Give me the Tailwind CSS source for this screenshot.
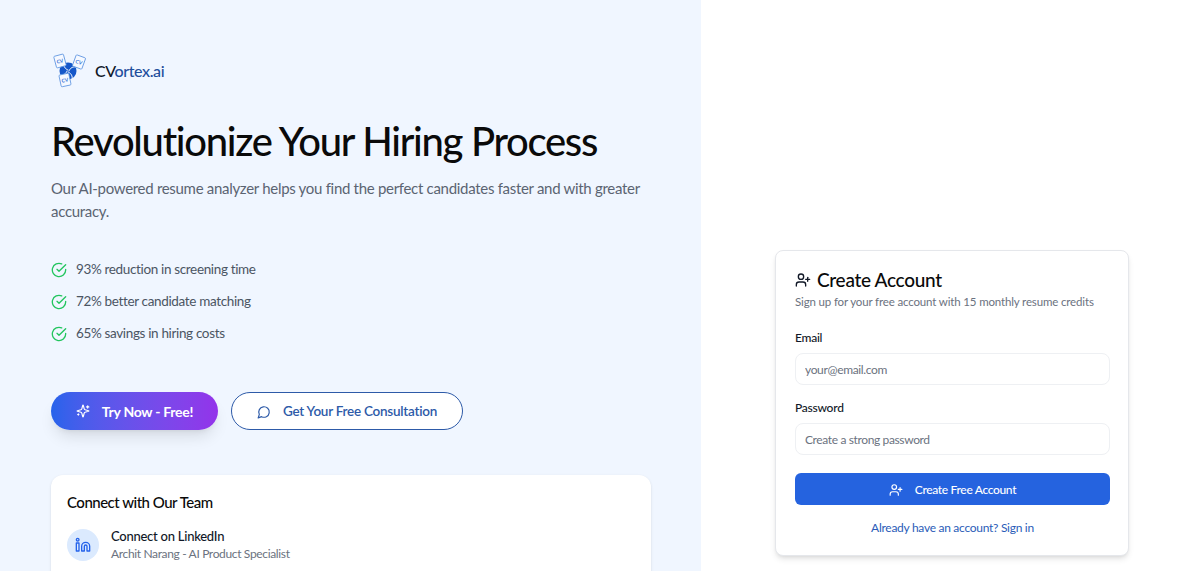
<!DOCTYPE html>
<html lang="en">
<head>
    <meta charset="UTF-8">
    <meta name="viewport" content="width=device-width, initial-scale=1.0">
    <title>CVortex.ai</title>
    <script src="https://cdn.jsdelivr.net/npm/@tailwindcss/browser@4"></script>
</head>
<body class="bg-white font-['Lato',sans-serif] h-[571px] overflow-hidden">
    <div class="flex h-[571px]">
        <!-- Left: hero -->
        <div class="w-[701px] h-[571px] overflow-hidden shrink-0 bg-[#f0f6ff] pl-[51px] pr-[51px] pt-[52px]">
            <!-- Logo -->
            <div class="flex items-center h-[36px]">
                <svg width="36" height="36" viewBox="0 0 36 36" class="-ml-[1px]">
                    <g fill="#1557c9" transform="translate(18 19)">
                        <circle r="8.5"/>
                        <g fill="none" stroke="#f0f6ff" stroke-width="1" stroke-linecap="round">
                            <path d="M1 0C2-3 5-5 8.5-4"/>
                            <path transform="rotate(90)" d="M1 0C2-3 5-5 8.5-4"/>
                            <path transform="rotate(180)" d="M1 0C2-3 5-5 8.5-4"/>
                            <path transform="rotate(270)" d="M1 0C2-3 5-5 8.5-4"/>
                        </g>
                    </g>
                    <g fill="#f6f9ff" stroke="#5b93e0" stroke-width="0.8">
                        <g transform="rotate(-15 10 9)"><rect x="5" y="3" width="10" height="12" rx="1"/><text x="6.5" y="11" font-size="5" font-weight="700" fill="#2f6fd6" stroke="none">CV</text></g>
                        <g transform="rotate(20 29 10)"><rect x="24" y="4" width="10" height="12" rx="1"/><text x="25.5" y="12" font-size="5" font-weight="700" fill="#2f6fd6" stroke="none">CV</text></g>
                        <g transform="rotate(-12 15 28)"><rect x="10" y="22" width="10" height="12" rx="1"/><text x="11.5" y="30" font-size="5" font-weight="700" fill="#2f6fd6" stroke="none">CV</text></g>
                    </g>
                </svg>
                <span class="ml-[9px] mt-[2px] text-[16px] font-medium tracking-[-0.4px] text-[#111827]">CV<span class="text-[#1f4e9c]">ortex.ai</span></span>
            </div>

            <h1 class="mt-[29px] text-[40px] leading-[48px] font-medium tracking-[-1.3px] text-[#0a0a0a] whitespace-nowrap">Revolutionize Your Hiring Process</h1>
            <p class="mt-[12px] text-[15px] leading-[22.5px] tracking-[-0.3px] text-[#5b6472] w-[600px]">Our AI-powered resume analyzer helps you find the perfect candidates faster and with greater accuracy.</p>

            <!-- Stats -->
            <ul class="mt-[37px] flex flex-col gap-[11px] text-[13.5px] leading-[21px] tracking-[-0.35px] text-[#4b5563]">
                <li class="flex items-center gap-[9px]">
                    <svg width="16" height="16" viewBox="0 0 24 24" fill="none" stroke="#22c55e" stroke-width="2" stroke-linecap="round" stroke-linejoin="round"><path d="M22 11.08V12a10 10 0 1 1-5.93-9.14"/><path d="m9 11 3 3L22 4"/></svg>
                    <span>93% reduction in screening time</span>
                </li>
                <li class="flex items-center gap-[9px]">
                    <svg width="16" height="16" viewBox="0 0 24 24" fill="none" stroke="#22c55e" stroke-width="2" stroke-linecap="round" stroke-linejoin="round"><path d="M22 11.08V12a10 10 0 1 1-5.93-9.14"/><path d="m9 11 3 3L22 4"/></svg>
                    <span>72% better candidate matching</span>
                </li>
                <li class="flex items-center gap-[9px]">
                    <svg width="16" height="16" viewBox="0 0 24 24" fill="none" stroke="#22c55e" stroke-width="2" stroke-linecap="round" stroke-linejoin="round"><path d="M22 11.08V12a10 10 0 1 1-5.93-9.14"/><path d="m9 11 3 3L22 4"/></svg>
                    <span>65% savings in hiring costs</span>
                </li>
            </ul>

            <!-- Buttons -->
            <div class="mt-[48px] flex gap-[13px]">
                <button class="h-[38px] w-[167px] rounded-full bg-gradient-to-r from-[#2563eb] to-[#9333ea] text-white text-[14px] font-bold tracking-[-0.27px] flex items-center justify-center gap-[12px] shadow-[0_10px_15px_-3px_rgba(0,0,0,0.1),0_4px_6px_-4px_rgba(0,0,0,0.1)]">
                    <svg width="14" height="14" viewBox="0 0 24 24" fill="none" stroke="currentColor" stroke-width="2" stroke-linecap="round" stroke-linejoin="round"><path d="M9.94 15.5A2 2 0 0 0 8.5 14.06l-6.14-1.58a.5.5 0 0 1 0-.96L8.5 9.94A2 2 0 0 0 9.94 8.5l1.58-6.14a.5.5 0 0 1 .96 0L14.06 8.5A2 2 0 0 0 15.5 9.94l6.14 1.58a.5.5 0 0 1 0 .96L15.5 14.06a2 2 0 0 0-1.44 1.44l-1.58 6.14a.5.5 0 0 1-.96 0z"/><path d="M20 3v4"/><path d="M22 5h-4"/><path d="M4 17v2"/><path d="M5 18H3"/></svg>
                    <span>Try Now - Free!</span>
                </button>
                <button class="h-[38px] w-[232px] pt-[1px] rounded-full bg-white border-[1.5px] border-[#2d5aa8] text-[#2d5aa8] text-[13.5px] font-semibold tracking-[-0.25px] flex items-center justify-center gap-[12px]">
                    <svg width="14" height="14" viewBox="0 0 24 24" fill="none" stroke="currentColor" stroke-width="2" stroke-linecap="round" stroke-linejoin="round"><path d="M7.9 20A9 9 0 1 0 4 16.1L2 22Z"/></svg>
                    <span>Get Your Free Consultation</span>
                </button>
            </div>

            <!-- Connect card -->
            <div class="mt-[45px] w-[600px] h-[140px] bg-white rounded-xl pt-[16px] px-[16px] shadow-sm">
                <h3 class="text-[15px] leading-[22px] font-medium tracking-[-0.5px] text-[#0a0a0a]">Connect with Our Team</h3>
                <div class="mt-[14px] flex items-center gap-[12px]">
                    <div class="w-[32px] h-[32px] rounded-full bg-[#dbeafe] flex items-center justify-center">
                        <svg width="16" height="16" viewBox="0 0 24 24" fill="none" stroke="#2563eb" stroke-width="2" stroke-linecap="round" stroke-linejoin="round"><path d="M16 8a6 6 0 0 1 6 6v7h-4v-7a2 2 0 0 0-2-2 2 2 0 0 0-2 2v7h-4v-7a6 6 0 0 1 6-6z"/><rect width="4" height="12" x="2" y="9"/><circle cx="4" cy="4" r="2"/></svg>
                    </div>
                    <div>
                        <p class="text-[13px] leading-[18px] font-medium tracking-[-0.25px] text-[#111827]">Connect on LinkedIn</p>
                        <p class="text-[12px] leading-[17px] tracking-[-0.35px] text-[#6b7280]">Archit Narang - AI Product Specialist</p>
                    </div>
                </div>
            </div>
        </div>

        <!-- Right: sign up -->
        <div class="flex-1 pl-[74px] pt-[250px]">
            <div class="w-[354px] h-[306px] bg-white border border-[#e5e7eb] rounded-lg shadow-md pl-[19px] pr-[18px] pt-[16px]">
                <div class="flex items-center gap-[6px]">
                    <svg width="16" height="16" viewBox="0 0 24 24" fill="none" stroke="#111827" stroke-width="2" stroke-linecap="round" stroke-linejoin="round"><path d="M16 21v-2a4 4 0 0 0-4-4H6a4 4 0 0 0-4 4v2"/><circle cx="9" cy="7" r="4"/><line x1="19" x2="19" y1="8" y2="14"/><line x1="22" x2="16" y1="11" y2="11"/></svg>
                    <h2 class="text-[19px] leading-[26px] font-medium tracking-[-0.3px] text-[#0a0a0a]">Create Account</h2>
                </div>
                <p class="text-[11.5px] leading-[17px] tracking-[-0.15px] text-[#6b7280] whitespace-nowrap">Sign up for your free account with 15 monthly resume credits</p>

                <label class="block mt-[19px] text-[12px] leading-[18px] font-medium tracking-[-0.25px] text-[#111827]">Email</label>
                <input type="email" placeholder="your@email.com" class="mt-[6px] block w-full h-[32px] rounded-lg border border-[#eef0f3] px-[9px] text-[12px] tracking-[-0.35px] placeholder:text-[#6b7280]">

                <label class="block mt-[14px] text-[12px] leading-[18px] font-medium tracking-[-0.25px] text-[#111827]">Password</label>
                <input type="password" placeholder="Create a strong password" class="mt-[6px] block w-full h-[32px] rounded-lg border border-[#eef0f3] px-[9px] text-[12px] tracking-[-0.37px] placeholder:text-[#6b7280]">

                <button class="mt-[18px] w-full h-[32px] pt-[1px] rounded-md bg-[#2563df] text-white text-[12px] font-medium tracking-[-0.33px] flex items-center justify-center gap-[12px]">
                    <svg width="14" height="14" viewBox="0 0 24 24" fill="none" stroke="currentColor" stroke-width="2" stroke-linecap="round" stroke-linejoin="round"><path d="M16 21v-2a4 4 0 0 0-4-4H6a4 4 0 0 0-4 4v2"/><circle cx="9" cy="7" r="4"/><line x1="19" x2="19" y1="8" y2="14"/><line x1="22" x2="16" y1="11" y2="11"/></svg>
                    <span>Create Free Account</span>
                </button>
                <p class="mt-[14px] text-center text-[12px] leading-[18px] tracking-[-0.28px] text-[#2a5cb8]">Already have an account? Sign in</p>
            </div>
        </div>
    </div>
</body>
</html>
